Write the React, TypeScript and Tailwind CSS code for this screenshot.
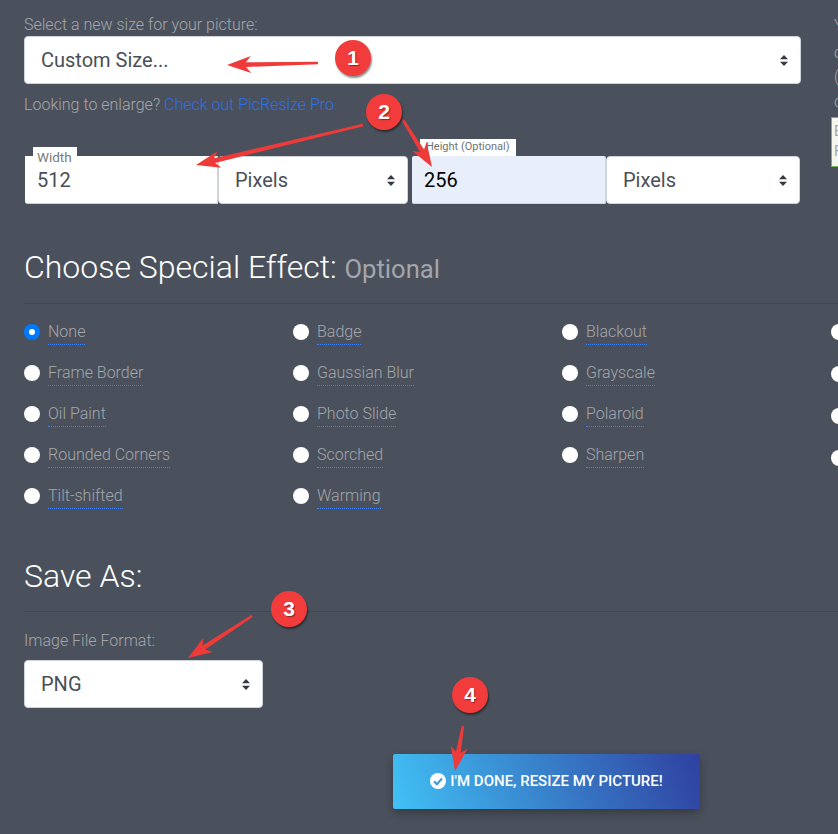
import React from 'react'

const EFFECTS = [
  ['None', 'Frame Border', 'Oil Paint', 'Rounded Corners', 'Tilt-shifted'],
  ['Badge', 'Gaussian Blur', 'Photo Slide', 'Scorched', 'Warming'],
  ['Blackout', 'Grayscale', 'Polaroid', 'Sharpen'],
]

function Carets() {
  return (
    <svg width="8" height="11" viewBox="0 0 8 11" className="shrink-0">
      <path d="M4 0 L8 4.2 H0 Z M4 11 L8 6.8 H0 Z" fill="#343a40" />
    </svg>
  )
}

function SelectBox({ label, className }: { label: string; className: string }) {
  return (
    <div
      className={`flex shrink-0 items-center justify-between rounded-[4px] border border-[#ced4da] bg-white pl-4 pr-3 text-[20px] text-[#495057] ${className}`}
    >
      <span>{label}</span>
      <Carets />
    </div>
  )
}

function Radio({ label, checked }: { label: string; checked?: boolean }) {
  return (
    <div className="flex h-[41px] items-start">
      {checked ? (
        <span className="mt-[1px] flex h-4 w-4 items-center justify-center rounded-full bg-[#007bff]">
          <span className="h-[6px] w-[6px] rounded-full bg-white" />
        </span>
      ) : (
        <span className="mt-[1px] h-4 w-4 rounded-full bg-white" />
      )}
      <span className="-mt-[3px] ml-2 border-b border-dotted border-[#3b82f6] text-[16px] leading-[24px] font-light text-[#a3a6ab]">
        {label}
      </span>
    </div>
  )
}

function Badge({ n, className }: { n: number; className: string }) {
  return (
    <div
      className={`absolute flex h-9 w-9 items-center justify-center rounded-full bg-[#f23c3c] text-[21px] font-bold text-white shadow-[1px_2px_2px_rgba(0,0,0,0.45)] [text-shadow:1px_1px_1px_rgba(0,0,0,0.4)] ${className}`}
      style={{ fontFamily: '"Liberation Sans", sans-serif' }}
    >
      {n}
    </div>
  )
}

// red annotation arrows drawn over the form
function Arrows() {
  const lines = [
    [318, 63, 227, 65],
    [363, 125, 196, 165],
    [403, 120, 432, 167],
    [252, 616, 188, 658],
    [463, 726, 455, 771],
  ]
  return (
    <svg width="838" height="834" className="pointer-events-none absolute top-0 left-0">
      {lines.map(([x1, y1, x2, y2], i) => {
        const a = Math.atan2(y2 - y1, x2 - x1)
        const ux = Math.cos(a)
        const uy = Math.sin(a)
        const nx = -uy
        const ny = ux
        const at = (back: number, side: number) => `${x2 - ux * back + nx * side} ${y2 - uy * back + ny * side}`
        const len = Math.hypot(x2 - x1, y2 - y1)
        const d = [
          `M${x2} ${y2}`,
          `L${at(24, 8.5)}`,
          `L${at(19, 2.4)}`,
          `L${at(len, 1.2)}`,
          `L${at(len, -1.2)}`,
          `L${at(19, -2.4)}`,
          `L${at(24, -8.5)}`,
          'Z',
        ].join(' ')
        return <path key={i} d={d} fill="#ef3a3a" />
      })}
    </svg>
  )
}

export default function App() {
  return (
    <div
      className="relative h-[834px] w-[838px] overflow-hidden bg-[#4b515c] pl-6"
      style={{ fontFamily: 'Roboto, sans-serif' }}
    >
      <div className="w-[777px] pt-4">
        <p className="text-[16px] leading-[18px] font-light text-[#a3a6ab]">Select a new size for your picture:</p>
        <SelectBox label="Custom Size..." className="mt-[2px] h-[48px]" />
        <p className="mt-[11px] text-[16px] leading-[20px] font-light text-[#a3a6ab]">
          Looking to enlarge? <span className="text-[#2a6ff0]">Check out PicResize Pro</span>
        </p>

        <div className="mt-[41px] flex items-start">
          <div className="relative ml-[1px] flex h-[48px] w-[193px] shrink-0 items-center rounded-bl-[3px] border-r border-b border-[#ced4da] bg-white pl-3 text-[20px] text-[#495057]">
            <span className="absolute -top-[9px] left-2 bg-white pt-[3px] pr-[5px] pl-1 text-[13.5px] leading-[14px] text-[#7b7b7b]">Width</span>
            512
          </div>
          <SelectBox label="Pixels" className="h-[48px] w-[190px]" />
          <div className="relative ml-[4px] flex h-[48px] w-[194px] shrink-0 items-center rounded-[2px] border-r border-b border-[#ced4da] bg-[#e8effb] pl-3 text-[20px] text-black">
            <span className="absolute -top-[17px] left-2 bg-white px-[6px] pb-[1px] text-[11px] leading-[16px] text-[#6f7378]">Height (Optional)</span>
            256
          </div>
          <SelectBox label="Pixels" className="h-[48px] w-[194px]" />
        </div>
      </div>

      <h2 className="mt-[43px] text-[32px] leading-[40px] font-light text-white">
        Choose Special Effect: <span className="text-[25.6px] font-normal text-[#a3a6ab]">Optional</span>
      </h2>
      <div className="mt-[14px] -mr-6 border-t border-[#41464f]" />

      <div className="mt-[19px] flex h-[196px]">
        {EFFECTS.map((col, i) => (
          <div key={i} className="w-[269px] shrink-0">
            {col.map((label) => (
              <Radio key={label} label={label} checked={label === 'None'} />
            ))}
          </div>
        ))}
        <div className="shrink-0">
          {[0, 1, 2, 3].map((i) => (
            <div key={i} className="h-[41px]">
              <span className="mt-[1px] block h-4 w-4 rounded-full bg-white" />
            </div>
          ))}
        </div>
      </div>

      <h2 className="mt-[37px] text-[32px] leading-[40px] font-light text-white">Save As:</h2>
      <div className="mt-[15px] -mr-6 border-t border-[#41464f]" />
      <p className="mt-5 text-[16px] leading-[18px] font-light text-[#a3a6ab]">Image File Format:</p>
      <SelectBox label="PNG" className="mt-[10px] h-[48px] w-[239px]" />

      <div className="mt-[46px] ml-[369px] flex h-[55px] w-[307px] items-center justify-center gap-1 rounded-[2px] bg-[linear-gradient(70deg,#41c1f5,#2f40a0)] text-[15px] font-medium text-white shadow-[0_4px_8px_rgba(0,0,0,0.3)]">
        <svg width="16" height="16" viewBox="0 0 16 16" className="-mt-[2px] shrink-0">
          <circle cx="8" cy="8" r="8" fill="white" />
          <path d="M4 8.4 L7 11.2 L12 5.6" fill="none" stroke="#3f9ddd" strokeWidth="2.2" />
        </svg>
        I'M DONE, RESIZE MY PICTURE!
      </div>

      {/* clipped sidebar at right edge */}
      <div className="absolute top-[14px] left-[834px] text-[16px] leading-[24px] font-light text-[#a3a6ab]">
        <p className="h-[27px]">Y</p>
        <p className="h-[24px]">c</p>
        <p className="h-[25px]">(</p>
        <p>c</p>
      </div>
      <div className="absolute top-[117px] left-[831px] h-[50px] w-[20px] border border-[#7fae5b] bg-[#f5f6ee] pl-[2px] pt-[3px] text-[14px] leading-[20px] text-[#a3a6ab]">
        <p>E</p>
        <p>F</p>
      </div>

      <Arrows />
      <Badge n={1} className="top-[40px] left-[335px]" />
      <Badge n={2} className="top-[94px] left-[366px]" />
      <Badge n={3} className="top-[591px] left-[271px]" />
      <Badge n={4} className="top-[677px] left-[452px]" />
    </div>
  )
}
